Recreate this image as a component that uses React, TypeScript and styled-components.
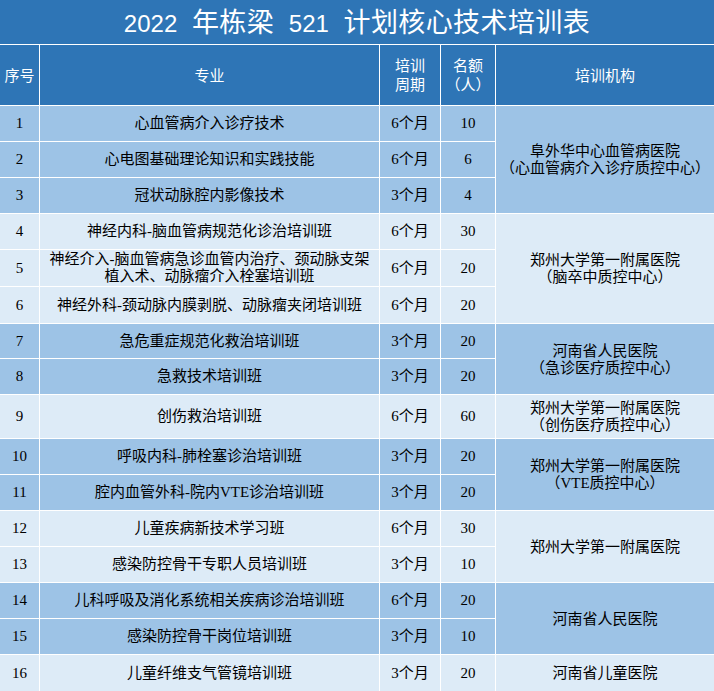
import React from "react";
import styled, { createGlobalStyle } from "styled-components";

const GlobalStyle = createGlobalStyle`
  html, body {
    margin: 0;
    padding: 0;
    background: #ffffff;
  }
  * { box-sizing: border-box; }
`;

const BLUE = "#2e75b6";
const DARK = "#9dc3e6";
const LIGHT = "#ddebf7";

type Tone = "dark" | "light";

const Sheet = styled.div`
  width: 714px;
  display: flex;
  flex-direction: column;
  gap: 1px;
  background: #ffffff;
`;

const Title = styled.div`
  height: 44px;
  background: ${BLUE};
  color: #ffffff;
  display: flex;
  align-items: center;
  justify-content: center;
  padding-top: 1px;
`;

const TitleText = styled.span`
  font-family: "Liberation Sans", "Noto Sans CJK SC", sans-serif;
  font-size: 24px;
  line-height: 30px;
  word-spacing: 8px;
  white-space: pre;
`;

const Han = styled.span`
  font-family: "Noto Sans CJK SC", sans-serif;
  font-size: 27px;
  letter-spacing: 0.4px;
  word-spacing: 0;
`;

const Grid = styled.div`
  display: grid;
  grid-template-columns: 39px 339px 60px 54px 218px;
  grid-template-rows: 60px 35px 35px 35px 35px 36px 36px 34px 35px 43px 35px 35px 35px 35px 35px 35px 36px;
  gap: 1px;
  background: #ffffff;
`;

const HeadCell = styled.div`
  background: ${BLUE};
  color: #ffffff;
  display: flex;
  align-items: center;
  justify-content: center;
  text-align: center;
  font-family: "Liberation Sans", "Noto Sans CJK SC", sans-serif;
  font-size: 15px;
  line-height: 19px;
  white-space: nowrap;
`;

const Cell = styled.div<{ $tone: Tone; $span?: number }>`
  background: ${(p) => (p.$tone === "dark" ? DARK : LIGHT)};
  color: #000000;
  display: flex;
  align-items: center;
  justify-content: center;
  text-align: center;
  font-family: "Liberation Serif", "Noto Sans CJK SC", serif;
  font-size: 15px;
  line-height: 17px;
  white-space: nowrap;
  ${(p) => (p.$span ? `grid-row: span ${p.$span};` : "")}
`;

const OrgCell = styled(Cell)`
  padding-top: 1px;
`;

type Row = { no: number; name: string[]; period: string; quota: string };
type Group = { tone: Tone; org: string[]; rows: Row[] };

const groups: Group[] = [
  {
    tone: "dark",
    org: ["阜外华中心血管病医院", "（心血管病介入诊疗质控中心）"],
    rows: [
      { no: 1, name: ["心血管病介入诊疗技术"], period: "6个月", quota: "10" },
      { no: 2, name: ["心电图基础理论知识和实践技能"], period: "6个月", quota: "6" },
      { no: 3, name: ["冠状动脉腔内影像技术"], period: "3个月", quota: "4" },
    ],
  },
  {
    tone: "light",
    org: ["郑州大学第一附属医院", "（脑卒中质控中心）"],
    rows: [
      { no: 4, name: ["神经内科-脑血管病规范化诊治培训班"], period: "6个月", quota: "30" },
      {
        no: 5,
        name: ["神经介入-脑血管病急诊血管内治疗、颈动脉支架", "植入术、动脉瘤介入栓塞培训班"],
        period: "6个月",
        quota: "20",
      },
      { no: 6, name: ["神经外科-颈动脉内膜剥脱、动脉瘤夹闭培训班"], period: "6个月", quota: "20" },
    ],
  },
  {
    tone: "dark",
    org: ["河南省人民医院", "（急诊医疗质控中心）"],
    rows: [
      { no: 7, name: ["急危重症规范化救治培训班"], period: "3个月", quota: "20" },
      { no: 8, name: ["急救技术培训班"], period: "3个月", quota: "20" },
    ],
  },
  {
    tone: "light",
    org: ["郑州大学第一附属医院", "（创伤医疗质控中心）"],
    rows: [{ no: 9, name: ["创伤救治培训班"], period: "6个月", quota: "60" }],
  },
  {
    tone: "dark",
    org: ["郑州大学第一附属医院", "（VTE质控中心）"],
    rows: [
      { no: 10, name: ["呼吸内科-肺栓塞诊治培训班"], period: "3个月", quota: "20" },
      { no: 11, name: ["腔内血管外科-院内VTE诊治培训班"], period: "3个月", quota: "20" },
    ],
  },
  {
    tone: "light",
    org: ["郑州大学第一附属医院"],
    rows: [
      { no: 12, name: ["儿童疾病新技术学习班"], period: "6个月", quota: "30" },
      { no: 13, name: ["感染防控骨干专职人员培训班"], period: "3个月", quota: "10" },
    ],
  },
  {
    tone: "dark",
    org: ["河南省人民医院"],
    rows: [
      { no: 14, name: ["儿科呼吸及消化系统相关疾病诊治培训班"], period: "6个月", quota: "20" },
      { no: 15, name: ["感染防控骨干岗位培训班"], period: "3个月", quota: "10" },
    ],
  },
  {
    tone: "light",
    org: ["河南省儿童医院"],
    rows: [{ no: 16, name: ["儿童纤维支气管镜培训班"], period: "3个月", quota: "20" }],
  },
];

const Lines: React.FC<{ lines: string[] }> = ({ lines }) => (
  <div>
    {lines.map((l, i) => (
      <React.Fragment key={i}>
        {i > 0 && <br />}
        {l}
      </React.Fragment>
    ))}
  </div>
);

export default function App() {
  return (
    <>
      <GlobalStyle />
      <Sheet>
        <Title>
          <TitleText>
            {"2022 "}
            <Han>年栋梁</Han>
            {" 521 "}
            <Han>计划核心技术培训表</Han>
          </TitleText>
        </Title>
        <Grid>
          <HeadCell>序号</HeadCell>
          <HeadCell>专业</HeadCell>
          <HeadCell>
            <Lines lines={["培训", "周期"]} />
          </HeadCell>
          <HeadCell>
            <Lines lines={["名额", "（人）"]} />
          </HeadCell>
          <HeadCell>培训机构</HeadCell>
          {groups.map((g) =>
            g.rows.map((r, idx) => (
              <React.Fragment key={r.no}>
                <Cell $tone={g.tone}>{r.no}</Cell>
                <Cell $tone={g.tone}>
                  <Lines lines={r.name} />
                </Cell>
                <Cell $tone={g.tone}>{r.period}</Cell>
                <Cell $tone={g.tone}>{r.quota}</Cell>
                {idx === 0 && (
                  <OrgCell $tone={g.tone} $span={g.rows.length}>
                    <Lines lines={g.org} />
                  </OrgCell>
                )}
              </React.Fragment>
            ))
          )}
        </Grid>
      </Sheet>
    </>
  );
}
